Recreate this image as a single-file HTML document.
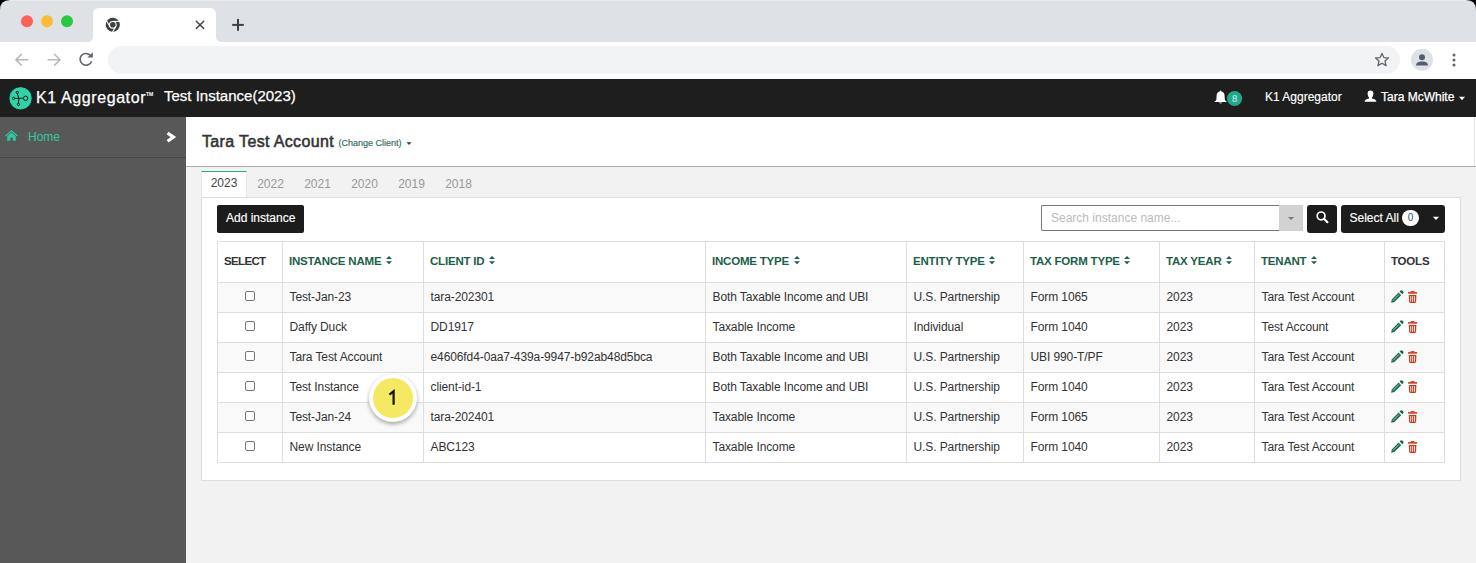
<!DOCTYPE html>
<html><head><meta charset="utf-8">
<style>
*{box-sizing:border-box;margin:0;padding:0}
html,body{width:1476px;height:563px;overflow:hidden}
body{position:relative;background:#f2f2f2;font-family:"Liberation Sans",sans-serif;color:#333;font-size:12px}
.abs{position:absolute}
#winbg{left:0;top:0;width:1476px;height:20px;background:#000}
#tabbar{left:0;top:0;width:1476px;height:42px;background:#dee1e6;border-radius:10px 10px 0 0}
#tab{left:93px;top:8px;width:123px;height:34px;background:#fff;border-radius:8px 8px 0 0}
#toolbar{left:0;top:42px;width:1476px;height:37px;background:#fff}
#omni{left:108px;top:46px;width:1292px;height:28px;background:#f1f3f4;border-radius:14px}
#header{left:0;top:79px;width:1476px;height:38px;background:#1e1e1e;color:#fff}
#sidebar{left:0;top:117px;width:186px;height:446px;background:#585858}
#homerow{left:0;top:117px;width:186px;height:41px;border-bottom:1px solid #474747}
#pagehead{left:186px;top:117px;width:1290px;height:50px;background:#fff;border-bottom:1px solid #aaa}
#content{left:186px;top:167px;width:1290px;height:396px;background:#f2f2f2}
#panel{left:201px;top:197px;width:1260px;height:284px;background:#fff;border:1px solid #ddd}
.ytab{top:171px;height:26px;color:#999;font-size:12px;line-height:26px;text-align:center}
table{position:absolute;left:217px;top:241px;border-collapse:collapse;font-size:12px;color:#333;table-layout:fixed;width:1228px}
td,th{border:1px solid #ddd;padding:0 0 0 6.5px;letter-spacing:-0.1px;text-align:left;white-space:nowrap;overflow:visible}
th{height:41px;font-weight:bold;color:#1b6048;font-size:11.5px;padding:0 0 2px 6px;line-height:14px}
th .ht{letter-spacing:-0.2px}
th.dk{color:#333}
.srt{display:inline-block;vertical-align:baseline;margin-left:4px;position:relative;top:-0.3px;left:0.5px}
td{height:30px;line-height:14px;padding-bottom:2px}
td.c{padding:0 0 3px 0;text-align:center}
.cb{width:10px;height:10px;border:1px solid #777;border-radius:2px;background:#fff;margin:0 auto}
tbody tr:nth-child(odd) td{background:#f9f9f9}
</style></head><body>
<svg class="abs" style="left:0;top:0" width="1476" height="79" viewBox="0 0 1476 79">
<rect x="0" y="0" width="1476" height="20" fill="#000"/>
<path d="M0 10 Q0 0 10 0 L1466 0 Q1476 0 1476 10 L1476 42 L0 42 Z" fill="#dee1e6"/>
<rect x="10" y="0" width="1456" height="1" fill="#e9eaec"/>
<path d="M87 42 Q93 42 93 36 L93 14 Q93 8 99 8 L210 8 Q216 8 216 14 L216 36 Q216 42 222 42 Z" fill="#fff"/>
<rect x="0" y="42" width="1476" height="37" fill="#fff"/>
<circle cx="27" cy="21.3" r="6" fill="#fe5f57"/>
<circle cx="47" cy="21.3" r="6" fill="#febc2e"/>
<circle cx="67" cy="21.3" r="6" fill="#28c840"/>
<g transform="translate(112.8 24.8)">
<circle r="7.1" fill="#3c4043"/>
<circle r="3.9" fill="#fff"/>
<circle r="2.8" fill="#3c4043"/>
<g stroke="#fff" stroke-width="1.1">
<line x1="0" y1="-3.4" x2="7.2" y2="-3.4"/>
<line x1="2.94" y1="1.7" x2="-0.66" y2="7.94" />
<line x1="-2.94" y1="1.7" x2="-6.54" y2="-4.54"/>
</g>
</g>
<g stroke="#3c4043" stroke-width="1.4" stroke-linecap="round">
<line x1="196.3" y1="21.3" x2="203.7" y2="28.6"/>
<line x1="203.7" y1="21.3" x2="196.3" y2="28.6"/>
</g>
<g stroke="#3c4043" stroke-width="2">
<line x1="232.2" y1="24.9" x2="243.8" y2="24.9"/>
<line x1="238" y1="19" x2="238" y2="30.8"/>
</g>
<rect x="108" y="46" width="1292" height="28" rx="14" fill="#f1f3f4"/>
<g fill="none" stroke="#b4b6b9" stroke-width="1.5">
<path d="M28.2 59.8 H16 M21.7 54 L15.9 59.8 L21.7 65.6"/>
<path d="M47.6 59.8 H59.8 M54.1 54 L59.9 59.8 L54.1 65.6"/>
</g>
<path d="M91.6 61.2 A5.9 5.9 0 1 1 90.2 55.2" fill="none" stroke="#5f6368" stroke-width="1.6"/>
<path d="M87.4 57.6 L92.8 57.6 L92.8 52.2 Z" fill="#5f6368"/>
<path d="M1382 53.4 L1383.9 57.6 L1388.4 58 L1385 61 L1386 65.6 L1382 63.2 L1378 65.6 L1379 61 L1375.6 58 L1380.1 57.6 Z" fill="none" stroke="#5f6368" stroke-width="1.3" stroke-linejoin="round"/>
<circle cx="1422" cy="59.8" r="11" fill="#dee1e6"/>
<circle cx="1422" cy="57.2" r="3" fill="#525c6e"/>
<path d="M1416 65.5 Q1416 61.5 1422 61.5 Q1428 61.5 1428 65.5 Z" fill="#525c6e"/>
<g fill="#5f6368"><circle cx="1454" cy="54.9" r="1.5"/><circle cx="1454" cy="59.9" r="1.5"/><circle cx="1454" cy="65" r="1.5"/></g>
</svg>
<div id="header" class="abs">
  <svg class="abs" style="left:0;top:0" width="40" height="38" viewBox="0 79 40 38">
    <circle cx="20.55" cy="98.3" r="11.6" fill="#2fd3a6" stroke="#101010" stroke-width="0.8"/>
    <g stroke="#1a1a1a" stroke-width="1" fill="none">
      <path d="M18.9 98.4 L17.3 93.4 M18.9 98.4 L18.4 103.4 M18.9 98.4 L14.7 98.4 M18.9 98.4 L23.4 98.3"/>
      <circle cx="17.3" cy="92.4" r="1.1"/>
      <circle cx="18.4" cy="104.4" r="1.1"/>
      <circle cx="13.6" cy="98.4" r="1.1"/>
      <circle cx="25.6" cy="98.3" r="2.2"/>
    </g>
  </svg>
  <div class="abs" style="left:36px;top:10px;font-size:16px;letter-spacing:0.6px;-webkit-text-stroke:0.25px #fff;line-height:18px">K1 Aggregator<span class="abs" style="font-size:5px;letter-spacing:0;-webkit-text-stroke:0.2px #fff;left:110px;top:3px;line-height:5px">TM</span></div>
  <div class="abs" style="left:164px;top:8px;font-size:15px;line-height:17px;-webkit-text-stroke:0.25px #fff">Test Instance(2023)</div>
  <svg class="abs" style="left:1212px;top:9px" width="34" height="20" viewBox="1212 88 34 20">
    <path d="M1220.6 90.6 Q1221.4 90.6 1221.4 91.6 Q1224.6 92.4 1224.6 96 L1224.8 99.4 Q1225.2 100.6 1226.6 101.6 L1226.6 102 L1214.6 102 L1214.6 101.6 Q1216 100.6 1216.4 99.4 L1216.6 96 Q1216.6 92.4 1219.8 91.6 Q1219.8 90.6 1220.6 90.6 Z" fill="#fff"/>
    <path d="M1219 102.4 Q1220.6 104.4 1222.2 102.4 Z" fill="#fff"/>
    <circle cx="1234.6" cy="98.5" r="7.6" fill="#1fa98a"/>
    <text x="1234.6" y="102.2" style="font-family:'Liberation Serif'" font-size="10.5" fill="#d8f5ec" text-anchor="middle">8</text>
  </svg>
  <div class="abs" style="left:1265px;top:11px;font-size:12px;line-height:14px;-webkit-text-stroke:0.15px #fff">K1 Aggregator</div>
  <svg class="abs" style="left:1363px;top:10px" width="16" height="15" viewBox="1363 89 16 15">
    <path d="M1370.5 90.4 Q1373.4 90.4 1373.4 93.6 Q1373.4 96.4 1372 97.6 L1372 98.4 Q1376.4 99.4 1376.4 101.8 L1364.6 101.8 Q1364.6 99.4 1369 98.4 L1369 97.6 Q1367.6 96.4 1367.6 93.6 Q1367.6 90.4 1370.5 90.4 Z" fill="#fff"/>
  </svg>
  <div class="abs" style="left:1381px;top:10.5px;font-size:12px;line-height:14px;-webkit-text-stroke:0.25px #fff">Tara McWhite</div>
  <svg class="abs" style="left:1458px;top:17px" width="8" height="5" viewBox="1458 96 8 5"><path d="M1459 96.8 L1465 96.8 L1462 100.2 Z" fill="#fff"/></svg>
</div>
<div id="sidebar" class="abs"></div>
<div id="homerow" class="abs">
  <svg class="abs" style="left:4px;top:12px" width="16" height="13" viewBox="4 129 16 13">
    <path d="M11.5 130 L17.8 135.6 L17 136.4 L11.5 131.6 L6 136.4 L5.2 135.6 Z" fill="#2ec9a0"/>
    <path d="M7.2 136.2 L11.5 132.4 L15.8 136.2 L15.8 140.8 L12.8 140.8 L12.8 137.8 L10.2 137.8 L10.2 140.8 L7.2 140.8 Z" fill="#2ec9a0"/>
  </svg>
  <div class="abs" style="left:28px;top:13px;color:#2ec9a0;font-size:12px;line-height:14px">Home</div>
  <svg class="abs" style="left:165px;top:13px" width="12" height="14" viewBox="165 130 12 14"><path d="M167.6 133 L173.4 137.1 L167.6 141.2" fill="none" stroke="#fff" stroke-width="3.2" stroke-linejoin="miter"/></svg>
</div>
<div id="pagehead" class="abs">
  <div class="abs" style="left:16px;top:16px;font-size:16px;line-height:18px;letter-spacing:0.35px;color:#333;-webkit-text-stroke:0.55px #333">Tara Test Account</div>
  <div class="abs" style="left:152.5px;top:21px;font-size:9px;line-height:10px;color:#2d6b5b;-webkit-text-stroke:0.15px #2d6b5b">(Change Client)</div>
  <svg class="abs" style="left:219px;top:24px" width="8" height="5" viewBox="405 141 8 5"><path d="M406.4 142.2 L411.6 142.2 L409 145.1 Z" fill="#2a4a40"/></svg>
</div>
<div id="content" class="abs"></div>
<div class="abs" style="left:1474px;top:117px;width:1px;height:49px;background:#e4e4e4"></div>
<div id="panel" class="abs"></div>
<div class="abs ytab" style="left:201px;width:46px;background:#fff;color:#444;height:26px;line-height:22px;border-top:1px solid #2aa88a;border-left:1px solid #e6e6e6;border-right:1px solid #e6e6e6">2023</div>
<div class="abs ytab" style="left:247px;width:47px">2022</div>
<div class="abs ytab" style="left:294px;width:47px">2021</div>
<div class="abs ytab" style="left:341px;width:47px">2020</div>
<div class="abs ytab" style="left:388px;width:47px">2019</div>
<div class="abs ytab" style="left:435px;width:47px">2018</div>

<div class="abs" style="left:217px;top:205px;width:87px;height:28px;background:#1c1c1c;border-radius:2px"></div>
<div class="abs" style="left:226px;top:211px;font-size:12px;line-height:14px;color:#fff;-webkit-text-stroke:0.15px #fff">Add instance</div>
<div class="abs" style="left:1041px;top:205px;width:239px;height:26px;border:1px solid #777;border-right:none;border-radius:2px 0 0 2px;background:#fff"></div>
<div class="abs" style="left:1051px;top:211px;font-size:12px;line-height:14px;color:#bbb">Search instance name...</div>
<div class="abs" style="left:1279px;top:205px;width:24px;height:26px;background:#d2d2d2"></div>
<svg class="abs" style="left:1287px;top:216px" width="8" height="5" viewBox="1287 216 8 5"><path d="M1288 216.9 L1294.1 216.9 L1291 219.9 Z" fill="#777"/></svg>
<div class="abs" style="left:1307px;top:205px;width:30px;height:28px;background:#1c1c1c;border-radius:3px"></div>
<svg class="abs" style="left:1313px;top:209px" width="20" height="20" viewBox="1313 209 20 20"><circle cx="1321.1" cy="215.9" r="3.9" fill="none" stroke="#fff" stroke-width="1.7"/><path d="M1324 218.8 L1327.4 222.2" stroke="#fff" stroke-width="2.2" stroke-linecap="round"/></svg>
<div class="abs" style="left:1341px;top:205px;width:104px;height:28px;background:#1c1c1c;border-radius:3px"></div>
<div class="abs" style="left:1349.5px;top:211px;font-size:12px;line-height:14px;color:#fff;-webkit-text-stroke:0.15px #fff">Select All</div>
<div class="abs" style="left:1402px;top:209.5px;width:17px;height:16px;border-radius:8.5px;background:#fff"></div>
<div class="abs" style="left:1402px;top:212px;width:17px;font-size:10px;line-height:12px;color:#2a4f80;text-align:center">0</div>
<svg class="abs" style="left:1432px;top:216px" width="8" height="5" viewBox="1432 216 8 5"><path d="M1432.8 216.8 L1439.1 216.8 L1436 220.1 Z" fill="#fff"/></svg>
<table id="grid">
<colgroup><col style="width:65px"><col style="width:141px"><col style="width:282px"><col style="width:201px"><col style="width:117px"><col style="width:136px"><col style="width:95px"><col style="width:130px"><col style="width:60px"></colgroup>
<thead><tr><th class="dk"><span class="ht" style="letter-spacing:-0.65px">SELECT</span></th>
<th><span class="ht">INSTANCE NAME</span><svg class="srt" width="6" height="9" viewBox="0 0 6 9"><path d="M0 3 L3 0 L6 3 Z M0 5.3 L6 5.3 L3 8.3 Z" fill="#1b6048"/></svg></th>
<th><span class="ht">CLIENT ID</span><svg class="srt" width="6" height="9" viewBox="0 0 6 9"><path d="M0 3 L3 0 L6 3 Z M0 5.3 L6 5.3 L3 8.3 Z" fill="#1b6048"/></svg></th>
<th><span class="ht">INCOME TYPE</span><svg class="srt" width="6" height="9" viewBox="0 0 6 9"><path d="M0 3 L3 0 L6 3 Z M0 5.3 L6 5.3 L3 8.3 Z" fill="#1b6048"/></svg></th>
<th><span class="ht">ENTITY TYPE</span><svg class="srt" width="6" height="9" viewBox="0 0 6 9"><path d="M0 3 L3 0 L6 3 Z M0 5.3 L6 5.3 L3 8.3 Z" fill="#1b6048"/></svg></th>
<th><span class="ht">TAX FORM TYPE</span><svg class="srt" width="6" height="9" viewBox="0 0 6 9"><path d="M0 3 L3 0 L6 3 Z M0 5.3 L6 5.3 L3 8.3 Z" fill="#1b6048"/></svg></th>
<th><span class="ht">TAX YEAR</span><svg class="srt" width="6" height="9" viewBox="0 0 6 9"><path d="M0 3 L3 0 L6 3 Z M0 5.3 L6 5.3 L3 8.3 Z" fill="#1b6048"/></svg></th>
<th><span class="ht">TENANT</span><svg class="srt" width="6" height="9" viewBox="0 0 6 9"><path d="M0 3 L3 0 L6 3 Z M0 5.3 L6 5.3 L3 8.3 Z" fill="#1b6048"/></svg></th>
<th class="dk"><span class="ht">TOOLS</span></th></tr></thead><tbody>
<tr><td class="c"><div class="cb"></div></td><td>Test-Jan-23</td><td>tara-202301</td><td>Both Taxable Income and UBI</td><td>U.S. Partnership</td><td>Form 1065</td><td>2023</td><td>Tara Test Account</td><td><svg width="30" height="14" viewBox="1388 289 30 14" style="display:block;margin-left:-4px"><path d="M1391.1 301.8 L1391.8 298.4 L1398.6 291.6 L1401.2 294.2 L1394.4 301 Z" fill="#1b6a50"/><path d="M1392.9 299.6 L1399 293.4" stroke="#b9e6d4" stroke-width="0.8"/><path d="M1399.6 290.6 L1400.6 289.6 Q1401.6 288.8 1402.6 289.7 L1403.1 290.2 Q1404 291.2 1403.2 292.2 L1402.2 293.2 Z" fill="#1b6a50"/><path d="M1410.4 290.9 Q1410.6 289.9 1411.6 289.9 L1413.6 289.9 Q1414.6 289.9 1414.8 290.9 L1417.1 290.9 L1417.1 292.8 L1408.1 292.8 L1408.1 290.9 Z" fill="#d24a2a"/><path d="M1408.8 293.9 L1416.4 293.9 L1416.1 300.8 Q1416 301.9 1414.9 301.9 L1410.3 301.9 Q1409.2 301.9 1409.1 300.8 Z" fill="#c63d1e"/><g fill="#fbe3dc"><rect x="1410.2" y="295.1" width="1" height="5.6"/><rect x="1412.1" y="295.1" width="1" height="5.6"/><rect x="1414" y="295.1" width="1" height="5.6"/></g></svg></td></tr>
<tr><td class="c"><div class="cb"></div></td><td>Daffy Duck</td><td>DD1917</td><td>Taxable Income</td><td>Individual</td><td>Form 1040</td><td>2023</td><td>Test Account</td><td><svg width="30" height="14" viewBox="1388 289 30 14" style="display:block;margin-left:-4px"><path d="M1391.1 301.8 L1391.8 298.4 L1398.6 291.6 L1401.2 294.2 L1394.4 301 Z" fill="#1b6a50"/><path d="M1392.9 299.6 L1399 293.4" stroke="#b9e6d4" stroke-width="0.8"/><path d="M1399.6 290.6 L1400.6 289.6 Q1401.6 288.8 1402.6 289.7 L1403.1 290.2 Q1404 291.2 1403.2 292.2 L1402.2 293.2 Z" fill="#1b6a50"/><path d="M1410.4 290.9 Q1410.6 289.9 1411.6 289.9 L1413.6 289.9 Q1414.6 289.9 1414.8 290.9 L1417.1 290.9 L1417.1 292.8 L1408.1 292.8 L1408.1 290.9 Z" fill="#d24a2a"/><path d="M1408.8 293.9 L1416.4 293.9 L1416.1 300.8 Q1416 301.9 1414.9 301.9 L1410.3 301.9 Q1409.2 301.9 1409.1 300.8 Z" fill="#c63d1e"/><g fill="#fbe3dc"><rect x="1410.2" y="295.1" width="1" height="5.6"/><rect x="1412.1" y="295.1" width="1" height="5.6"/><rect x="1414" y="295.1" width="1" height="5.6"/></g></svg></td></tr>
<tr><td class="c"><div class="cb"></div></td><td>Tara Test Account</td><td>e4606fd4-0aa7-439a-9947-b92ab48d5bca</td><td>Both Taxable Income and UBI</td><td>U.S. Partnership</td><td>UBI 990-T/PF</td><td>2023</td><td>Tara Test Account</td><td><svg width="30" height="14" viewBox="1388 289 30 14" style="display:block;margin-left:-4px"><path d="M1391.1 301.8 L1391.8 298.4 L1398.6 291.6 L1401.2 294.2 L1394.4 301 Z" fill="#1b6a50"/><path d="M1392.9 299.6 L1399 293.4" stroke="#b9e6d4" stroke-width="0.8"/><path d="M1399.6 290.6 L1400.6 289.6 Q1401.6 288.8 1402.6 289.7 L1403.1 290.2 Q1404 291.2 1403.2 292.2 L1402.2 293.2 Z" fill="#1b6a50"/><path d="M1410.4 290.9 Q1410.6 289.9 1411.6 289.9 L1413.6 289.9 Q1414.6 289.9 1414.8 290.9 L1417.1 290.9 L1417.1 292.8 L1408.1 292.8 L1408.1 290.9 Z" fill="#d24a2a"/><path d="M1408.8 293.9 L1416.4 293.9 L1416.1 300.8 Q1416 301.9 1414.9 301.9 L1410.3 301.9 Q1409.2 301.9 1409.1 300.8 Z" fill="#c63d1e"/><g fill="#fbe3dc"><rect x="1410.2" y="295.1" width="1" height="5.6"/><rect x="1412.1" y="295.1" width="1" height="5.6"/><rect x="1414" y="295.1" width="1" height="5.6"/></g></svg></td></tr>
<tr><td class="c"><div class="cb"></div></td><td>Test Instance</td><td>client-id-1</td><td>Both Taxable Income and UBI</td><td>U.S. Partnership</td><td>Form 1040</td><td>2023</td><td>Tara Test Account</td><td><svg width="30" height="14" viewBox="1388 289 30 14" style="display:block;margin-left:-4px"><path d="M1391.1 301.8 L1391.8 298.4 L1398.6 291.6 L1401.2 294.2 L1394.4 301 Z" fill="#1b6a50"/><path d="M1392.9 299.6 L1399 293.4" stroke="#b9e6d4" stroke-width="0.8"/><path d="M1399.6 290.6 L1400.6 289.6 Q1401.6 288.8 1402.6 289.7 L1403.1 290.2 Q1404 291.2 1403.2 292.2 L1402.2 293.2 Z" fill="#1b6a50"/><path d="M1410.4 290.9 Q1410.6 289.9 1411.6 289.9 L1413.6 289.9 Q1414.6 289.9 1414.8 290.9 L1417.1 290.9 L1417.1 292.8 L1408.1 292.8 L1408.1 290.9 Z" fill="#d24a2a"/><path d="M1408.8 293.9 L1416.4 293.9 L1416.1 300.8 Q1416 301.9 1414.9 301.9 L1410.3 301.9 Q1409.2 301.9 1409.1 300.8 Z" fill="#c63d1e"/><g fill="#fbe3dc"><rect x="1410.2" y="295.1" width="1" height="5.6"/><rect x="1412.1" y="295.1" width="1" height="5.6"/><rect x="1414" y="295.1" width="1" height="5.6"/></g></svg></td></tr>
<tr><td class="c"><div class="cb"></div></td><td>Test-Jan-24</td><td>tara-202401</td><td>Taxable Income</td><td>U.S. Partnership</td><td>Form 1065</td><td>2023</td><td>Tara Test Account</td><td><svg width="30" height="14" viewBox="1388 289 30 14" style="display:block;margin-left:-4px"><path d="M1391.1 301.8 L1391.8 298.4 L1398.6 291.6 L1401.2 294.2 L1394.4 301 Z" fill="#1b6a50"/><path d="M1392.9 299.6 L1399 293.4" stroke="#b9e6d4" stroke-width="0.8"/><path d="M1399.6 290.6 L1400.6 289.6 Q1401.6 288.8 1402.6 289.7 L1403.1 290.2 Q1404 291.2 1403.2 292.2 L1402.2 293.2 Z" fill="#1b6a50"/><path d="M1410.4 290.9 Q1410.6 289.9 1411.6 289.9 L1413.6 289.9 Q1414.6 289.9 1414.8 290.9 L1417.1 290.9 L1417.1 292.8 L1408.1 292.8 L1408.1 290.9 Z" fill="#d24a2a"/><path d="M1408.8 293.9 L1416.4 293.9 L1416.1 300.8 Q1416 301.9 1414.9 301.9 L1410.3 301.9 Q1409.2 301.9 1409.1 300.8 Z" fill="#c63d1e"/><g fill="#fbe3dc"><rect x="1410.2" y="295.1" width="1" height="5.6"/><rect x="1412.1" y="295.1" width="1" height="5.6"/><rect x="1414" y="295.1" width="1" height="5.6"/></g></svg></td></tr>
<tr><td class="c"><div class="cb"></div></td><td>New Instance</td><td>ABC123</td><td>Taxable Income</td><td>U.S. Partnership</td><td>Form 1040</td><td>2023</td><td>Tara Test Account</td><td><svg width="30" height="14" viewBox="1388 289 30 14" style="display:block;margin-left:-4px"><path d="M1391.1 301.8 L1391.8 298.4 L1398.6 291.6 L1401.2 294.2 L1394.4 301 Z" fill="#1b6a50"/><path d="M1392.9 299.6 L1399 293.4" stroke="#b9e6d4" stroke-width="0.8"/><path d="M1399.6 290.6 L1400.6 289.6 Q1401.6 288.8 1402.6 289.7 L1403.1 290.2 Q1404 291.2 1403.2 292.2 L1402.2 293.2 Z" fill="#1b6a50"/><path d="M1410.4 290.9 Q1410.6 289.9 1411.6 289.9 L1413.6 289.9 Q1414.6 289.9 1414.8 290.9 L1417.1 290.9 L1417.1 292.8 L1408.1 292.8 L1408.1 290.9 Z" fill="#d24a2a"/><path d="M1408.8 293.9 L1416.4 293.9 L1416.1 300.8 Q1416 301.9 1414.9 301.9 L1410.3 301.9 Q1409.2 301.9 1409.1 300.8 Z" fill="#c63d1e"/><g fill="#fbe3dc"><rect x="1410.2" y="295.1" width="1" height="5.6"/><rect x="1412.1" y="295.1" width="1" height="5.6"/><rect x="1414" y="295.1" width="1" height="5.6"/></g></svg></td></tr>
</tbody></table>
<div class="abs" style="left:369px;top:374px;width:48px;height:48px;border-radius:50%;background:#fff;box-shadow:0 2px 4px rgba(0,0,0,0.35)"></div>
<div class="abs" style="left:373px;top:378px;width:40px;height:40px;border-radius:50%;background:#f5e862"></div>
<svg class="abs" style="left:385px;top:388px" width="14" height="19" viewBox="385 388 14 19"><path d="M389.4 394.6 L393.6 391.3 L393.6 404.8" fill="none" stroke="#111" stroke-width="2.2" stroke-linejoin="miter"/></svg>
</body></html>
